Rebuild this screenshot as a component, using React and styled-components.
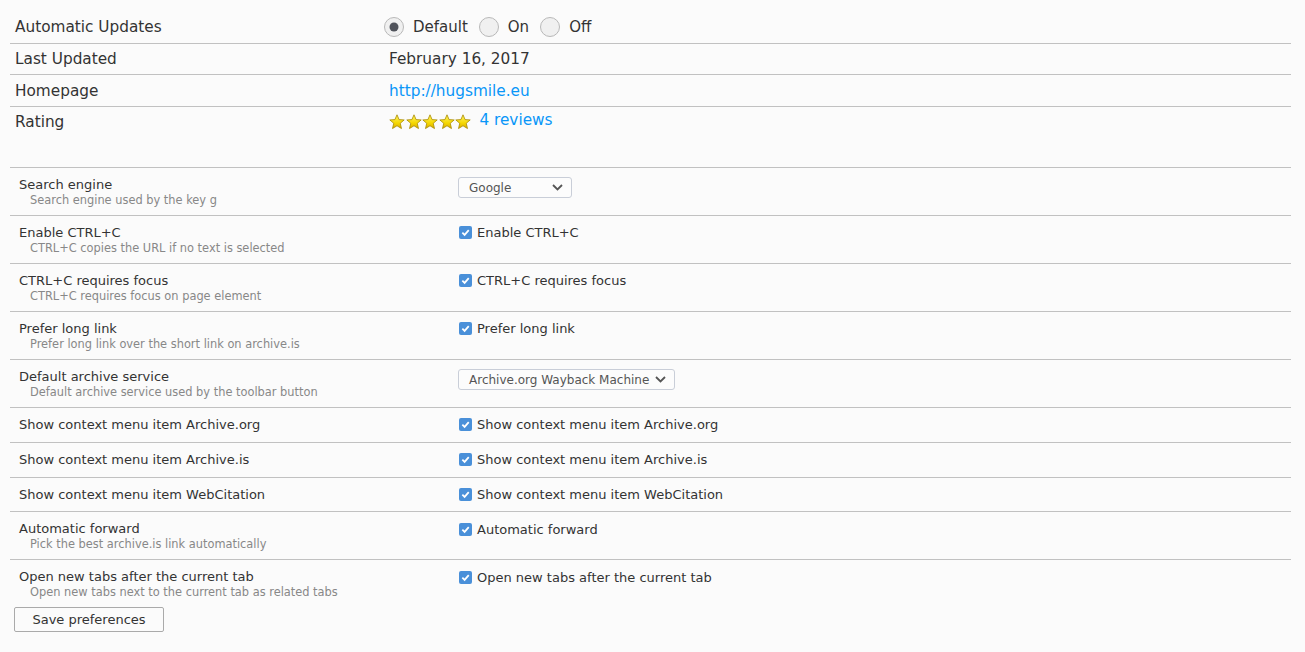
import React from "react";
import styled, { createGlobalStyle } from "styled-components";

const Global = createGlobalStyle`
  html, body { margin: 0; padding: 0; background: #fbfbfb; }
  body { font-family: "DejaVu Sans", "Liberation Sans", sans-serif; color: #333; }
`;

const Page = styled.div`
  padding: 10px 14px 0 10px;
  width: 1281px;
`;

const InfoTable = styled.div`
  display: flex;
  flex-direction: column;
  margin-bottom: 30px;
`;

const InfoRow = styled.div`
  display: grid;
  grid-template-columns: 374px 1fr;
  align-items: center;
  height: ${(p) => p.$h}px;
  border-bottom: ${(p) => (p.$last ? "none" : "1px solid #c1c1c1")};
  font-size: 15.3px;
  color: #333;
`;

const InfoLabel = styled.div`
  padding-left: 5px;
`;

const InfoValue = styled.div`
  padding-left: 5px;
  display: flex;
  align-items: center;
`;

const Link = styled.a`
  color: #0996f8;
  text-decoration: none;
`;

const RadioGroup = styled.div`
  display: flex;
  align-items: center;
  gap: 11px;
  margin-left: -5px;
  font-size: 15px;
`;

const RadioOption = styled.label`
  display: flex;
  align-items: center;
  gap: 9px;
`;

const Stars = styled.div`
  display: flex;
  gap: 0.6px;
  margin-right: 8px;
`;

const Reviews = styled(Link)`
  position: relative;
  top: -2px;
`;

const PrefList = styled.div`
  border-top: 1px solid #c1c1c1;
  display: flex;
  flex-direction: column;
`;

const PrefRow = styled.div`
  display: grid;
  grid-template-columns: 448px 1fr;
  align-items: start;
  padding: 9px 0 9.1px;
  border-bottom: ${(p) => (p.$last ? "none" : "1px solid #c1c1c1")};
`;

const PrefText = styled.div`
  padding-left: 9px;
  display: flex;
  flex-direction: column;
`;

const PrefTitle = styled.div`
  font-size: 13px;
  line-height: 15.6px;
  color: #333;
`;

const PrefDesc = styled.div`
  font-size: 11.4px;
  line-height: 13.35px;
  color: #888;
  padding-left: 11px;
  position: relative;
  top: 1px;
`;

const Control = styled.div`
  display: flex;
  align-items: center;
  height: 15.6px;
`;

const CheckLabel = styled.label`
  display: flex;
  align-items: center;
  gap: 5px;
  font-size: 13px;
  color: #333;
  padding-left: 1px;
`;

const Box = styled.span`
  width: 13px;
  height: 13px;
  border-radius: 2px;
  background: #4a90d9;
  display: flex;
  align-items: center;
  justify-content: center;
`;

const Select = styled.div`
  box-sizing: border-box;
  width: ${(p) => p.$width}px;
  height: 21px;
  border: 1px solid #c9ced8;
  border-radius: 3px;
  background: #fcfcfc;
  display: flex;
  align-items: center;
  justify-content: space-between;
  padding: 0 8px 0 10px;
  font-size: 12px;
  color: #555;
`;

const SaveButton = styled.button`
  margin: 0 0 0 4px;
  width: 150px;
  height: 25px;
  border: 1px solid #aaa;
  border-radius: 2px;
  background: #fbfbfb;
  font-family: "DejaVu Sans", "Liberation Sans", sans-serif;
  font-size: 13px;
  color: #333;
  padding: 0;
`;

const Radio = ({ checked }) => (
  <svg width="20" height="20" viewBox="0 0 20 20">
    <circle cx="10" cy="10" r="9.5" fill="#f0f0f0" stroke="#b8b8b8" />
    {checked && <circle cx="10" cy="10" r="4.5" fill="#50535b" />}
  </svg>
);

const Star = () => (
  <svg width="16" height="16" viewBox="0 0 20 20">
    <defs>
      <linearGradient id="sg" x1="0" y1="0" x2="0" y2="1">
        <stop offset="0" stopColor="#fff36a" />
        <stop offset="0.6" stopColor="#f5d800" />
        <stop offset="1" stopColor="#d9a800" />
      </linearGradient>
    </defs>
    <path
      d="M10 1 L12.6 7 L19 7.4 L14.1 11.6 L15.6 18.2 L10 14.7 L4.4 18.2 L5.9 11.6 L1 7.4 L7.4 7 Z"
      fill="url(#sg)"
      stroke="#a88a00"
      strokeWidth="1"
      strokeLinejoin="round"
    />
  </svg>
);

const Check = () => (
  <svg width="9" height="9" viewBox="0 0 10 10">
    <path d="M1.5 5.2 L4 7.6 L8.6 2.4" fill="none" stroke="#fff" strokeWidth="2" />
  </svg>
);

const Chevron = () => (
  <svg width="11" height="7" viewBox="0 0 11 7">
    <path d="M1 1 L5.5 5.5 L10 1" fill="none" stroke="#555" strokeWidth="1.8" />
  </svg>
);

const prefs = [
  { title: "Search engine", desc: "Search engine used by the key g", select: "Google", width: 114 },
  { title: "Enable CTRL+C", desc: "CTRL+C copies the URL if no text is selected", check: "Enable CTRL+C" },
  { title: "CTRL+C requires focus", desc: "CTRL+C requires focus on page element", check: "CTRL+C requires focus" },
  { title: "Prefer long link", desc: "Prefer long link over the short link on archive.is", check: "Prefer long link" },
  { title: "Default archive service", desc: "Default archive service used by the toolbar button", select: "Archive.org Wayback Machine", width: 217 },
  { title: "Show context menu item Archive.org", check: "Show context menu item Archive.org" },
  { title: "Show context menu item Archive.is", check: "Show context menu item Archive.is" },
  { title: "Show context menu item WebCitation", check: "Show context menu item WebCitation" },
  { title: "Automatic forward", desc: "Pick the best archive.is link automatically", check: "Automatic forward" },
  { title: "Open new tabs after the current tab", desc: "Open new tabs next to the current tab as related tabs", check: "Open new tabs after the current tab" },
];

export default function App() {
  return (
    <>
      <Global />
      <Page>
        <InfoTable>
          <InfoRow $h={33}>
            <InfoLabel>Automatic Updates</InfoLabel>
            <InfoValue>
              <RadioGroup>
                <RadioOption><Radio checked />Default</RadioOption>
                <RadioOption><Radio />On</RadioOption>
                <RadioOption><Radio />Off</RadioOption>
              </RadioGroup>
            </InfoValue>
          </InfoRow>
          <InfoRow $h={30}>
            <InfoLabel>Last Updated</InfoLabel>
            <InfoValue>February 16, 2017</InfoValue>
          </InfoRow>
          <InfoRow $h={31}>
            <InfoLabel>Homepage</InfoLabel>
            <InfoValue><Link href="#">http://hugsmile.eu</Link></InfoValue>
          </InfoRow>
          <InfoRow $h={30} $last>
            <InfoLabel>Rating</InfoLabel>
            <InfoValue>
              <Stars>
                <Star /><Star /><Star /><Star /><Star />
              </Stars>
              <Reviews href="#">4 reviews</Reviews>
            </InfoValue>
          </InfoRow>
        </InfoTable>
        <PrefList>
          {prefs.map((p, i) => (
            <PrefRow key={p.title} $last={i === prefs.length - 1}>
              <PrefText>
                <PrefTitle>{p.title}</PrefTitle>
                {p.desc && <PrefDesc>{p.desc}</PrefDesc>}
              </PrefText>
              {p.select ? (
                <Select $width={p.width}>
                  <span>{p.select}</span>
                  <Chevron />
                </Select>
              ) : (
                <Control>
                  <CheckLabel>
                    <Box><Check /></Box>
                    {p.check}
                  </CheckLabel>
                </Control>
              )}
            </PrefRow>
          ))}
        </PrefList>
        <SaveButton>Save preferences</SaveButton>
      </Page>
    </>
  );
}
